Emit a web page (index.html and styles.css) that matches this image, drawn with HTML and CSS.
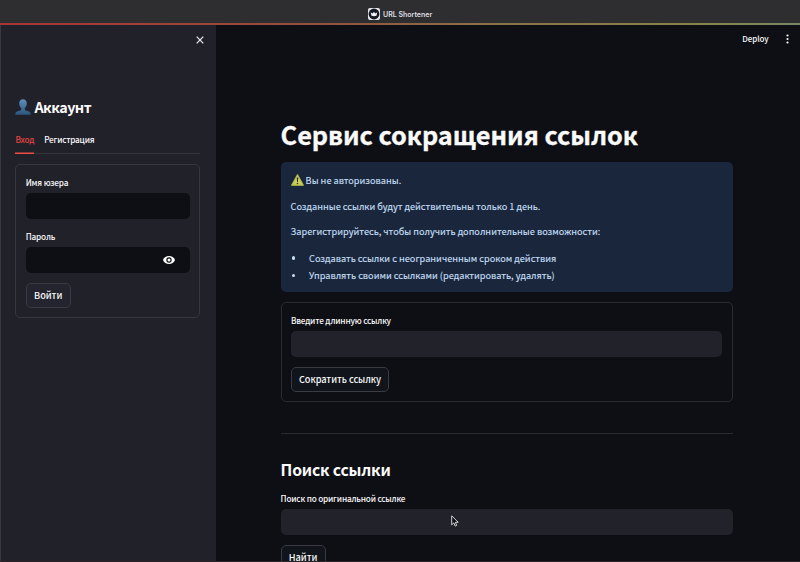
FILE: index.html
```html
<!DOCTYPE html>
<html lang="ru">
<head>
<meta charset="utf-8">
<title>URL Shortener</title>
<link rel="stylesheet" href="styles.css">
</head>
<body>
<div class="window">
  <header class="titlebar">
    <svg class="favicon" viewBox="0 0 12 12"><rect width="12" height="12" rx="2" fill="#e4e7ec"/><circle cx="6" cy="6" r="5.4" fill="#161a22"/><path d="M2.7 4.2 4.4 5.4 6 3.9 7.6 5.4 9.3 4.2 8.5 7.8Q6 8.7 3.5 7.8Z" fill="#f3f4f6"/></svg>
    <span class="tab-title">URL Shortener</span>
  </header>
  <div class="accent"></div>
  <div class="app">
    <aside class="sidebar">
      <div class="close-row"><svg class="close" viewBox="0 0 8 8"><path d="M.7.7l6.600 6.600M7.300.7.7 7.300" stroke="#f0f0f3" stroke-width="1.200"/></svg></div>
      <h2 class="account">
        <svg class="person" viewBox="0 0 16 16"><defs><linearGradient id="p" x1="0" y1="0" x2="0" y2="1"><stop offset="0" stop-color="#5f8eb9"/><stop offset="1" stop-color="#29577f"/></linearGradient></defs><path d="M8 .3C5.600.3 4.100 2 4.200 4.600c.1 2.200.9 3.500 2 4.400v1.500c0 .5-.3.8-.9 1L2 12.500C.8 13 .4 13.800.3 15.700h15.400c-.1-1.900-.5-2.700-1.700-3.200l-3.300-1c-.6-.2-.9-.5-.9-1V9c1.100-.9 1.900-2.200 2-4.400C11.900 2 10.400.3 8 .3Z" fill="url(#p)"/></svg>
        <span class="account-text">Аккаунт</span>
      </h2>
      <nav class="tabs"><span class="tab active">Вход</span><span class="tab reg">Регистрация</span></nav>
      <form class="card login">
        <label class="label name-label">Имя юзера</label>
        <div class="field"></div>
        <label class="label pass-label">Пароль</label>
        <div class="field password"><svg class="eye" viewBox="0 0 12 8"><path d="M6 0C3.300 0 1 1.600 0 4c1 2.400 3.300 4 6 4s5-1.600 6-4C11 1.600 8.700 0 6 0Z" fill="#fff"/><circle cx="6" cy="4" r="2.700" fill="#0e1117"/><circle cx="6" cy="4" r="1.500" fill="#fff"/></svg></div>
        <div class="button enter"><span>Войти</span></div>
      </form>
    </aside>
    <main class="main">
      <div class="toolbar"><span class="deploy">Deploy</span><svg class="dots" viewBox="0 0 3 10"><circle cx="1.500" cy="1.500" r="1.100"/><circle cx="1.500" cy="5" r="1.100"/><circle cx="1.500" cy="8.500" r="1.100"/></svg></div>
      <h1 class="title"><span>Сервис сокращения ссылок</span></h1>
      <section class="alert">
        <p><svg class="warn" viewBox="0 0 13 12"><path d="M6.500.8 12.300 11.200H.7Z" fill="#c9cf55" stroke="#b9bf4b" stroke-width="1.200" stroke-linejoin="round"/><path d="M5.800 3.400h1.400L6.900 8h-.8Z" fill="#29291f"/><circle cx="6.500" cy="9.500" r=".75" fill="#29291f"/></svg><span>Вы не авторизованы.</span></p>
        <p><span>Созданные ссылки будут действительны только 1 день.</span></p>
        <p><span>Зарегистрируйтесь, чтобы получить дополнительные возможности:</span></p>
        <ul>
          <li><span>Создавать ссылки с неограниченным сроком действия</span></li>
          <li><span>Управлять своими ссылками (редактировать, удалять)</span></li>
        </ul>
      </section>
      <form class="card shorten">
        <label class="label long-label">Введите длинную ссылку</label>
        <div class="field light"></div>
        <div class="button short-btn"><span>Сократить ссылку</span></div>
      </form>
      <hr class="divider">
      <h2 class="search-title"><span>Поиск ссылки</span></h2>
      <label class="label search-label">Поиск по оригинальной ссылке</label>
      <div class="field light search-field"></div>
      <div class="button find"><span>Найти</span></div>
    </main>
  </div>
  <div class="window-edge"></div>
  <svg class="cursor" viewBox="0 0 8 12"><path d="M.7.8v9l2.100-1.900 1.400 3.200 1.500-.7-1.400-3.100h2.900Z" fill="#101116" stroke="#e6e6e6" stroke-width=".9"/></svg>
</div>
</body>
</html>
```
FILE: styles.css
```css
* { box-sizing: border-box; }
body { margin: 0; background: #0e0f14; color: #fafafa; font-family: "Noto Sans CJK SC", "Noto Sans", sans-serif; font-size: 9.2px; }
h1, h2, p, ul { margin: 0; padding: 0; }
svg { display: block; flex: none; }
.window { width: 800px; height: 562px; overflow: hidden; display: flex; flex-direction: column; position: relative; }
.titlebar { height: 23px; flex: none; background: #2e2e31; display: flex; align-items: center; padding: 5px 0 0 368px; gap: 3px; }
.favicon { width: 12px; height: 12px; }
.tab-title { font: 600 7px/12px Inter, sans-serif; color: #dedee0; white-space: nowrap; margin-top: 1px; }
.accent { height: 2px; flex: none; background: linear-gradient(90deg, #a93436, #96503f 40%, #8b7048 60%, #858648 88%, #778666); }
.app { flex: 1; min-height: 0; display: grid; grid-template-columns: 216px 1fr; }
.sidebar { background: #21212a; border-left: 1px solid #393a40; padding: 0 15.6px 0 14.4px; min-width: 0; }
.close-row { height: 30px; display: flex; justify-content: flex-end; align-items: center; margin-right: -4px; }
.close { width: 8px; height: 8px; }
.account { display: flex; align-items: center; gap: 3px; height: 20px; margin-top: 42px; font-size: 14.4px; line-height: 20px; letter-spacing: -.55px; }
.person { width: 16px; height: 16px; }
.tabs { display: flex; gap: 10px; height: 26px; margin-top: 11px; border-bottom: 1px solid #35353d; line-height: 22px; font-size: 8.2px; font-weight: 500; letter-spacing: -.2px; }
.tab { height: 26px; white-space: nowrap; }
.active { color: #e3443f; box-shadow: inset 0 -1.5px #f04b45; }
.card { border: 1px solid #37373f; border-radius: 5px; padding: 0 9.3px; display: flex; flex-direction: column; }
.login { height: 154px; margin-top: 10px; }
.label { display: block; height: 14px; line-height: 14px; font-size: 8.2px; font-weight: 500; letter-spacing: -.17px; white-space: nowrap; align-self: flex-start; }
.name-label { margin: 10px 0 4px; }
.pass-label { margin: 10px 0 4px; }
.field { height: 26px; flex: none; border-radius: 5px; background: #0e0f14; }
.password { display: flex; align-items: center; justify-content: flex-end; padding-right: 15px; }
.eye { width: 12px; height: 8px; }
.button { height: 25px; flex: none; border: 1px solid #393a42; border-radius: 5px; display: flex; align-items: center; justify-content: center; padding-bottom: 2px; font-size: 9.2px; line-height: 14px; font-weight: 500; letter-spacing: -.05px; white-space: nowrap; }
.enter { width: 45px; margin-top: 10px; background: #23242d; }
.main { background: #0e0f14; padding: 0 67.4px 0 64.6px; min-width: 0; overflow: hidden; }
.toolbar { height: 28px; display: flex; justify-content: flex-end; align-items: center; gap: 17px; margin-right: -56px; font-size: 8px; font-weight: 500; letter-spacing: -.05px; }
.deploy { line-height: 12px; margin-top: -1px; }
.dots { width: 3px; height: 10px; fill: #fafafa; }
.title { height: 40px; margin-top: 61px; font-size: 25.3px; line-height: 40px; letter-spacing: -.06px; white-space: nowrap; -webkit-text-stroke: .3px #fafafa; }
.alert { height: 130px; margin-top: 8px; padding: 10px; background: #1a263b; border-radius: 5px; color: #c3def3; line-height: 16px; white-space: nowrap; -webkit-text-stroke: .15px #c3def3; }
.alert p { display: flex; height: 16px; margin-bottom: 9.7px; }
.warn { width: 13px; height: 12px; margin: 2px 2px 0 0; }
.alert ul { list-style: none; }
.alert li { height: 17.2px; display: flex; align-items: center; }
.alert li::before { content: ""; width: 3.4px; height: 3.4px; border-radius: 50%; background: #c3def3; margin: 1px 13.9px 0 1.2px; }
.shorten { height: 100px; margin-top: 10px; border-color: #2a2b30; }
.long-label { margin: 10px 0 4px; }
.light { background: #22222b; }
.short-btn { width: 98px; margin-top: 10px; background: #11141b; }
.divider { border: 0; height: 1px; background: #2a2b30; margin: 31px 0 0; }
.search-title { height: 26px; margin-top: 23px; font-size: 15.8px; line-height: 26px; letter-spacing: -.22px; }
.search-label { margin: 8px 0 4px; }
.find { width: 45px; margin-top: 10px; background: #11141b; }
.window-edge { position: absolute; left: 0; right: 0; bottom: 0; height: 1px; background: #2c2229; }
.cursor { position: absolute; left: 450.5px; top: 515px; width: 8px; height: 12px; }
```
